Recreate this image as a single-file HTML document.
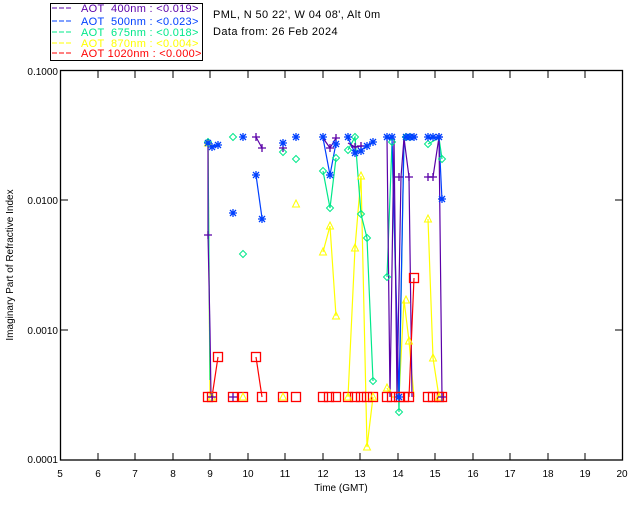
<!DOCTYPE html>
<html><head><meta charset="utf-8"><style>
html,body{margin:0;padding:0;background:#fff;width:640px;height:512px;overflow:hidden}
svg{display:block;font-family:"Liberation Sans","DejaVu Sans",sans-serif}
</style></head><body>
<svg width="640" height="512" viewBox="0 0 640 512" xmlns="http://www.w3.org/2000/svg">
<defs>
<g id="st" stroke="#0040ff" stroke-width="1.3" fill="none"><path d="M-4,0H4M0,-4V4M-3,-3L3,3M-3,3L3,-3"/></g>
<g id="pl" stroke="#5a00a8" stroke-width="1.3" fill="none"><path d="M-4,0H4M0,-4V4"/></g>
<g id="di" stroke="#00e88a" stroke-width="1" fill="none"><path d="M0,-3.5L3.5,0L0,3.5L-3.5,0Z"/></g>
<g id="tr" stroke="#ffff00" stroke-width="1" fill="none"><path d="M0,-4L3.5,3L-3.5,3Z"/></g>
<g id="sq" stroke="#ff0000" stroke-width="1.3" fill="none"><rect x="-4.5" y="-4.5" width="9" height="9"/></g>
</defs>
<!-- legend -->
<rect x="50.5" y="3.5" width="152" height="57" fill="none" stroke="#000"/>
<g font-size="11" letter-spacing="0.3">
<line x1="52" y1="8" x2="73" y2="8" stroke="#5a00a8" stroke-dasharray="5,2"/>
<text x="81" y="12" fill="#5a00a8" xml:space="preserve">AOT  400nm : &lt;0.019&gt;</text>
<line x1="52" y1="21" x2="73" y2="21" stroke="#0040ff" stroke-dasharray="5,2"/>
<text x="81" y="25" fill="#0040ff" xml:space="preserve">AOT  500nm : &lt;0.023&gt;</text>
<line x1="52" y1="32" x2="73" y2="32" stroke="#00e88a" stroke-dasharray="5,2"/>
<text x="81" y="36" fill="#00e88a" xml:space="preserve">AOT  675nm : &lt;0.018&gt;</text>
<line x1="52" y1="43" x2="73" y2="43" stroke="#ffff00" stroke-dasharray="5,2"/>
<text x="81" y="47" fill="#ffff00" xml:space="preserve">AOT  870nm : &lt;0.004&gt;</text>
<line x1="52" y1="53" x2="73" y2="53" stroke="#ff0000" stroke-dasharray="5,2"/>
<text x="81" y="57" fill="#ff0000" xml:space="preserve">AOT 1020nm : &lt;0.000&gt;</text>
</g>
<text x="213" y="18" font-size="11" letter-spacing="0.4">PML, N 50 22', W 04 08', Alt 0m</text>
<text x="213" y="35" font-size="11" letter-spacing="0.4">Data from: 26 Feb 2024</text>
<!-- frame -->
<rect x="60.5" y="70.5" width="562" height="389.5" fill="none" stroke="#000" stroke-width="1.3"/>
<g stroke="#000" stroke-width="1">
<path d="M98,71v7M135,71v7M173,71v7M210,71v7M248,71v7M285,71v7M323,71v7M360,71v7M398,71v7M435,71v7M473,71v7M510,71v7M548,71v7M585,71v7"/>
<path d="M98,460v-7M135,460v-7M173,460v-7M210,460v-7M248,460v-7M285,460v-7M323,460v-7M360,460v-7M398,460v-7M435,460v-7M473,460v-7M510,460v-7M548,460v-7M585,460v-7"/>
<path d="M61,200h7M61,330h7M622,200h-7M622,330h-7"/>
</g>
<g font-size="10" text-anchor="end">
<text x="58" y="75">0.1000</text><text x="58" y="204">0.0100</text><text x="58" y="334">0.0010</text><text x="58" y="463">0.0001</text>
</g>
<g font-size="10" text-anchor="middle">
<text x="60" y="477">5</text><text x="98" y="477">6</text><text x="135" y="477">7</text><text x="173" y="477">8</text><text x="210" y="477">9</text><text x="248" y="477">10</text><text x="285" y="477">11</text><text x="323" y="477">12</text><text x="360" y="477">13</text><text x="398" y="477">14</text><text x="435" y="477">15</text><text x="473" y="477">16</text><text x="510" y="477">17</text><text x="548" y="477">18</text><text x="585" y="477">19</text><text x="622" y="477">20</text>
<text x="341" y="491">Time (GMT)</text>
<text transform="translate(13,265) rotate(-90)">Imaginary Part of Refractive Index</text>
</g>
<!-- lines -->
<g fill="none" stroke-width="1.2">
<g stroke="#ffff00">
<polyline points="208,143 210,397 212,397"/>
<polyline points="323,252 330,226 336,316"/>
<polyline points="348,397 355,248 361,176 367,447 373,397"/>
<polyline points="387,388 392,397 399,397 404,300 409,341 414,397"/>
<polyline points="428,219 433,358 439,397"/>
</g>
<g stroke="#00e88a">
<polyline points="208,142 210,380"/>
<polyline points="323,171 330,208 336,158"/>
<polyline points="348,150 355,137 361,214 367,238 373,381"/>
<polyline points="387,277 392,142 399,412 404,138 409,138"/>
<polyline points="428,144 439,138 442,159"/>
</g>
<g stroke="#0040ff">
<polyline points="208,143 212,147 218,145"/>
<polyline points="256,175 262,218"/>
<polyline points="323,138 330,175 336,143"/>
<polyline points="348,138 355,153 361,150 367,146 373,142"/>
<polyline points="387,138 392,138 399,397 404,138 409,138 416,138"/>
<polyline points="428,138 433,138 439,138 442,200"/>
</g>
<g stroke="#5a00a8">
<polyline points="208,142 208,235 210,330 211,397"/>
<polyline points="256,137 262,148"/>
<polyline points="323,138 330,148 336,138"/>
<polyline points="348,143 355,147 361,146 367,146"/>
<polyline points="387,138 390,397 394,138 397,397 401,177 404,138 409,177 412,397"/>
<polyline points="428,177 433,177 439,137 442,397"/>
</g>
<g stroke="#ff0000">
<polyline points="208,397 212,397 218,357"/>
<polyline points="256,357 262,397"/>
<polyline points="409,397 414,278"/>
</g>
</g>
<!-- markers -->
<g>
<use href="#sq" x="208" y="397"/><use href="#sq" x="212" y="397"/><use href="#sq" x="218" y="357"/><use href="#sq" x="233" y="397"/><use href="#sq" x="243" y="397"/><use href="#sq" x="256" y="357"/><use href="#sq" x="262" y="397"/><use href="#sq" x="283" y="397"/><use href="#sq" x="296" y="397"/><use href="#sq" x="323" y="397"/><use href="#sq" x="329" y="397"/><use href="#sq" x="336" y="397"/><use href="#sq" x="348" y="397"/><use href="#sq" x="355" y="397"/><use href="#sq" x="361" y="397"/><use href="#sq" x="367" y="397"/><use href="#sq" x="373" y="397"/><use href="#sq" x="387" y="397"/><use href="#sq" x="392" y="397"/><use href="#sq" x="399" y="397"/><use href="#sq" x="404" y="397"/><use href="#sq" x="409" y="397"/><use href="#sq" x="414" y="278"/><use href="#sq" x="428" y="397"/><use href="#sq" x="433" y="397"/><use href="#sq" x="439" y="397"/><use href="#sq" x="442" y="397"/>

<use href="#tr" x="208" y="143"/><use href="#tr" x="212" y="397"/><use href="#tr" x="243" y="397"/><use href="#tr" x="283" y="397"/><use href="#tr" x="296" y="204"/><use href="#tr" x="323" y="252"/><use href="#tr" x="330" y="226"/><use href="#tr" x="336" y="316"/><use href="#tr" x="348" y="397"/><use href="#tr" x="355" y="248"/><use href="#tr" x="361" y="176"/><use href="#tr" x="367" y="447"/><use href="#tr" x="373" y="397"/><use href="#tr" x="387" y="388"/><use href="#tr" x="406" y="300"/><use href="#tr" x="409" y="341"/><use href="#tr" x="428" y="219"/><use href="#tr" x="433" y="358"/><use href="#tr" x="439" y="397"/>

<use href="#di" x="208" y="142"/><use href="#di" x="233" y="137"/><use href="#di" x="243" y="254"/><use href="#di" x="283" y="152"/><use href="#di" x="296" y="159"/><use href="#di" x="323" y="171"/><use href="#di" x="330" y="208"/><use href="#di" x="336" y="158"/><use href="#di" x="348" y="150"/><use href="#di" x="355" y="137"/><use href="#di" x="361" y="214"/><use href="#di" x="367" y="238"/><use href="#di" x="373" y="381"/><use href="#di" x="387" y="277"/><use href="#di" x="392" y="142"/><use href="#di" x="399" y="412"/><use href="#di" x="406" y="137"/><use href="#di" x="410" y="137"/><use href="#di" x="428" y="144"/><use href="#di" x="442" y="159"/>

<use href="#pl" x="208" y="235"/><use href="#pl" x="212" y="397"/><use href="#pl" x="233" y="397"/><use href="#pl" x="256" y="137"/><use href="#pl" x="262" y="148"/><use href="#pl" x="283" y="148"/><use href="#pl" x="330" y="148"/><use href="#pl" x="336" y="138"/><use href="#pl" x="355" y="147"/><use href="#pl" x="361" y="146"/><use href="#pl" x="399" y="177"/><use href="#pl" x="409" y="177"/><use href="#pl" x="428" y="177"/><use href="#pl" x="433" y="177"/><use href="#pl" x="439" y="137"/><use href="#pl" x="442" y="397"/>

<use href="#st" x="208" y="143"/><use href="#st" x="212" y="147"/><use href="#st" x="218" y="145"/><use href="#st" x="233" y="213"/><use href="#st" x="243" y="137"/><use href="#st" x="256" y="175"/><use href="#st" x="262" y="219"/><use href="#st" x="283" y="143"/><use href="#st" x="296" y="137"/><use href="#st" x="323" y="137"/><use href="#st" x="330" y="175"/><use href="#st" x="336" y="144"/><use href="#st" x="348" y="137"/><use href="#st" x="355" y="153"/><use href="#st" x="361" y="151"/><use href="#st" x="367" y="146"/><use href="#st" x="373" y="142"/><use href="#st" x="387" y="137"/><use href="#st" x="392" y="137"/><use href="#st" x="399" y="397"/><use href="#st" x="406" y="137"/><use href="#st" x="410" y="137"/><use href="#st" x="414" y="137"/><use href="#st" x="428" y="137"/><use href="#st" x="433" y="137"/><use href="#st" x="439" y="137"/><use href="#st" x="442" y="199"/>
</g>
</svg>
</body></html>
